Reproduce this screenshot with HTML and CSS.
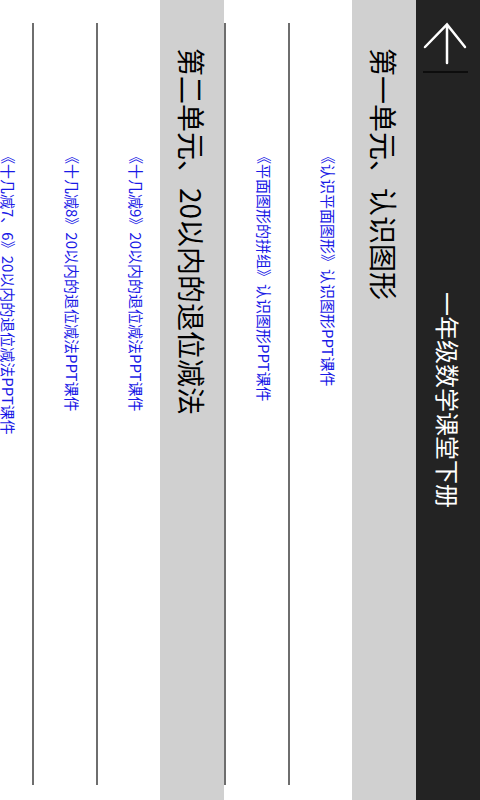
FILE: index.html
```html
<!DOCTYPE html>
<html lang="zh-CN">
<head>
<meta charset="utf-8">
<title>一年级数学课堂下册</title>
<link rel="stylesheet" href="styles.css">
</head>
<body>
<div class="page">
  <header class="appbar">
    <div class="back">
      <svg class="back-icon" width="64" height="80" viewBox="0 0 64 80">
        <path d="M31 25 V63 M9 47 L31 24.5 L49 47" fill="none" stroke="#ffffff" stroke-width="2.5" stroke-linecap="round" stroke-linejoin="miter"/>
        <path d="M7 72 H52" stroke="#0d0d0d" stroke-width="2"/>
      </svg>
    </div>
    <h1 class="title">一年级数学课堂下册</h1>
  </header>
  <section class="unit">
    <h2 class="unit-head">第一单元、认识图形</h2>
    <ul class="items">
      <li class="item"><a class="link" href="#">《认识平面图形》认识图形PPT课件</a><span class="divider"></span></li>
      <li class="item"><a class="link" href="#">《平面图形的拼组》认识图形PPT课件</a><span class="divider"></span></li>
    </ul>
  </section>
  <section class="unit">
    <h2 class="unit-head">第二单元、20以内的退位减法</h2>
    <ul class="items">
      <li class="item"><a class="link" href="#">《十几减9》20以内的退位减法PPT课件</a><span class="divider"></span></li>
      <li class="item"><a class="link" href="#">《十几减8》20以内的退位减法PPT课件</a><span class="divider"></span></li>
      <li class="item"><a class="link" href="#">《十几减7、6》20以内的退位减法PPT课件</a><span class="divider"></span></li>
    </ul>
  </section>
</div>
</body>
</html>
```
FILE: styles.css
```css
html, body {
  margin: 0;
  padding: 0;
  background: #ffffff;
  overflow: hidden;
}

.page {
  width: 480px;
  height: 800px;
  overflow: hidden;
  writing-mode: vertical-rl;
  text-orientation: sideways;
  font-family: "Noto Sans CJK SC", "Noto Sans", sans-serif;
  background: #ffffff;
}

.appbar {
  block-size: 64px;
  inline-size: 800px;
  background: #232323;
  display: grid;
  grid-template-columns: 80px 1fr 80px;
  align-items: center;
}

.back {
  grid-column: 1;
  grid-row: 1;
  block-size: 64px;
  inline-size: 80px;
}

.back-icon {
  display: block;
  width: 64px;
  height: 80px;
}

.title {
  margin: 0;
  grid-column: 1 / 4;
  grid-row: 1;
  justify-self: center;
  font-size: 24px;
  font-weight: normal;
  line-height: 64px;
  color: #ffffff;
}

.unit {
  display: block;
}

.unit-head {
  margin: 0;
  block-size: 64px;
  line-height: 64px;
  padding-inline-start: 48px;
  background: #d0d0d0;
  color: #000000;
  font-size: 28px;
  font-weight: normal;
  white-space: nowrap;
}

.items {
  list-style: none;
  margin: 0;
  padding: 0;
}

.item {
  block-size: 64px;
  display: block;
}

.link {
  display: block;
  block-size: 48px;
  line-height: 48px;
  padding-inline-start: 149px;
  color: #1a1ae6;
  font-size: 15px;
  text-decoration: none;
  white-space: nowrap;
}

.divider {
  display: block;
  block-size: 2px;
  margin-block-start: 14px;
  margin-inline: 23px 15px;
  background: #6e6e6e;
}
```
